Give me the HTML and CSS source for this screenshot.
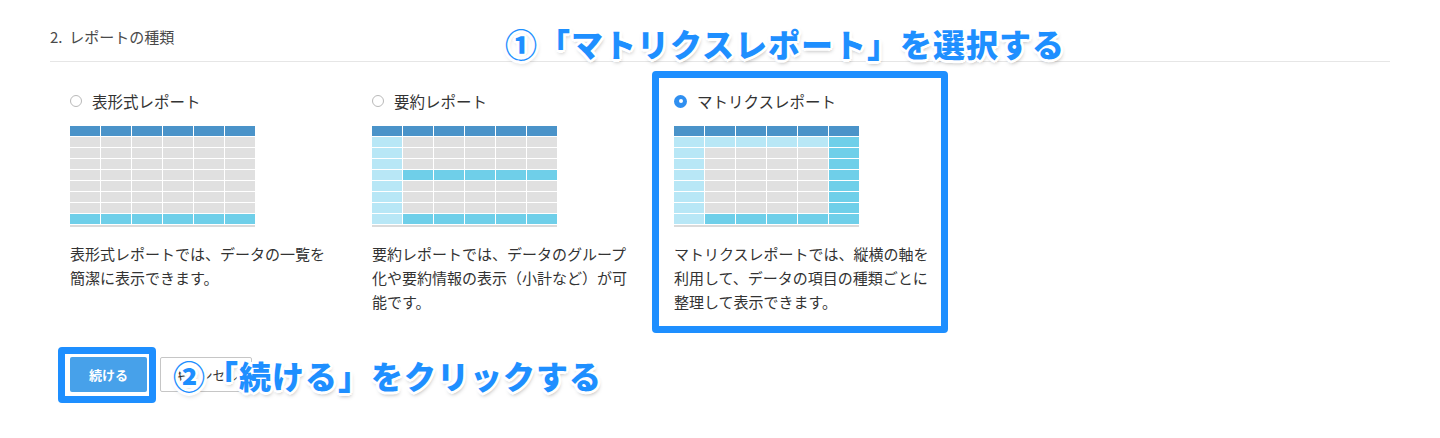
FILE: index.html
```html
<!DOCTYPE html>
<html lang="ja">
<head>
<meta charset="utf-8">
<title>レポートの種類</title>
<link rel="stylesheet" href="styles.css">
</head>
<body>
<div class="page">
  <div class="section-title">2.&nbsp; レポートの種類</div>

  <div class="options">
    <div class="option">
      <div class="radio-row"><span class="radio"></span><span class="label">表形式レポート</span></div>
      <div class="grid">
        <i class="h"></i><i class="h"></i><i class="h"></i><i class="h"></i><i class="h"></i><i class="h"></i>
        <i class="g"></i><i class="g"></i><i class="g"></i><i class="g"></i><i class="g"></i><i class="g"></i>
        <i class="g"></i><i class="g"></i><i class="g"></i><i class="g"></i><i class="g"></i><i class="g"></i>
        <i class="g"></i><i class="g"></i><i class="g"></i><i class="g"></i><i class="g"></i><i class="g"></i>
        <i class="g"></i><i class="g"></i><i class="g"></i><i class="g"></i><i class="g"></i><i class="g"></i>
        <i class="g"></i><i class="g"></i><i class="g"></i><i class="g"></i><i class="g"></i><i class="g"></i>
        <i class="g"></i><i class="g"></i><i class="g"></i><i class="g"></i><i class="g"></i><i class="g"></i>
        <i class="g"></i><i class="g"></i><i class="g"></i><i class="g"></i><i class="g"></i><i class="g"></i>
        <i class="m"></i><i class="m"></i><i class="m"></i><i class="m"></i><i class="m"></i><i class="m"></i>
      </div>
      <div class="grid-line"></div>
      <p class="desc">表形式レポートでは、データの一覧を簡潔に表示できます。</p>
    </div>

    <div class="option">
      <div class="radio-row"><span class="radio"></span><span class="label">要約レポート</span></div>
      <div class="grid">
        <i class="h"></i><i class="h"></i><i class="h"></i><i class="h"></i><i class="h"></i><i class="h"></i>
        <i class="l"></i><i class="g"></i><i class="g"></i><i class="g"></i><i class="g"></i><i class="g"></i>
        <i class="l"></i><i class="g"></i><i class="g"></i><i class="g"></i><i class="g"></i><i class="g"></i>
        <i class="l"></i><i class="g"></i><i class="g"></i><i class="g"></i><i class="g"></i><i class="g"></i>
        <i class="l"></i><i class="m"></i><i class="m"></i><i class="m"></i><i class="m"></i><i class="m"></i>
        <i class="l"></i><i class="g"></i><i class="g"></i><i class="g"></i><i class="g"></i><i class="g"></i>
        <i class="l"></i><i class="g"></i><i class="g"></i><i class="g"></i><i class="g"></i><i class="g"></i>
        <i class="l"></i><i class="g"></i><i class="g"></i><i class="g"></i><i class="g"></i><i class="g"></i>
        <i class="l"></i><i class="m"></i><i class="m"></i><i class="m"></i><i class="m"></i><i class="m"></i>
      </div>
      <div class="grid-line"></div>
      <p class="desc">要約レポートでは、データのグループ化や要約情報の表示（小計など）が可能です。</p>
    </div>

    <div class="option">
      <div class="radio-row"><span class="radio checked"></span><span class="label">マトリクスレポート</span></div>
      <div class="grid">
        <i class="h"></i><i class="h"></i><i class="h"></i><i class="h"></i><i class="h"></i><i class="h"></i>
        <i class="l"></i><i class="l"></i><i class="l"></i><i class="l"></i><i class="l"></i><i class="m"></i>
        <i class="l"></i><i class="g"></i><i class="g"></i><i class="g"></i><i class="g"></i><i class="m"></i>
        <i class="l"></i><i class="g"></i><i class="g"></i><i class="g"></i><i class="g"></i><i class="m"></i>
        <i class="l"></i><i class="g"></i><i class="g"></i><i class="g"></i><i class="g"></i><i class="m"></i>
        <i class="l"></i><i class="g"></i><i class="g"></i><i class="g"></i><i class="g"></i><i class="m"></i>
        <i class="l"></i><i class="g"></i><i class="g"></i><i class="g"></i><i class="g"></i><i class="m"></i>
        <i class="l"></i><i class="g"></i><i class="g"></i><i class="g"></i><i class="g"></i><i class="m"></i>
        <i class="l"></i><i class="m"></i><i class="m"></i><i class="m"></i><i class="m"></i><i class="m"></i>
      </div>
      <div class="grid-line"></div>
      <p class="desc">マトリクスレポートでは、縦横の軸を利用して、データの項目の種類ごとに整理して表示できます。</p>
      <div class="highlight hl-option"></div>
    </div>
  </div>

  <div class="actions">
    <button class="btn btn-primary">続ける</button>
    <button class="btn btn-cancel">キャンセル</button>
    <div class="highlight hl-button"></div>
  </div>

  <div class="note note-1">①「マトリクスレポート」を選択する</div>
  <div class="note note-2">②「続ける」をクリックする</div>
</div>
</body>
</html>
```

FILE: styles.css
```css
* { box-sizing: border-box; }

html, body {
  margin: 0;
  padding: 0;
  background: #ffffff;
}

body {
  font-family: "Noto Sans CJK JP", "Noto Sans", sans-serif;
  color: #333333;
}

.page {
  position: relative;
  width: 1440px;
  height: 438px;
  padding-top: 27px;
  overflow: hidden;
}

.section-title {
  margin-left: 50px;
  width: 1340px;
  font-size: 15px;
  line-height: 20px;
  color: #4a4a4a;
  padding-bottom: 14px;
  border-bottom: 1px solid #e6e6e6;
}

.options {
  display: flex;
  gap: 40px;
  margin-left: 70px;
  padding-top: 29px;
}

.option {
  position: relative;
  width: 262px;
}

.radio-row {
  display: flex;
  align-items: center;
  height: 20px;
}

.radio {
  width: 12px;
  height: 12px;
  border: 1px solid #b9b9b9;
  border-radius: 50%;
  background: #ffffff;
  flex: none;
}

.radio.checked {
  width: 13px;
  height: 13px;
  border: none;
  background: #2f8ff0;
  display: flex;
  align-items: center;
  justify-content: center;
}

.radio.checked::after {
  content: "";
  width: 4px;
  height: 4px;
  border-radius: 50%;
  background: #ffffff;
}

.label {
  margin-left: 10px;
  font-size: 15.5px;
  color: #333333;
  line-height: 20px;
}

.grid {
  margin-top: 15px;
  display: grid;
  grid-template-columns: repeat(6, 30px);
  grid-auto-rows: 10px;
  gap: 1px;
  width: 185px;
}

.grid i { display: block; }
.grid .h { background: #4a93c9; }
.grid .g { background: #e0e0e0; }
.grid .l { background: #b8e7f6; }
.grid .m { background: #6fcfe9; }

.grid-line {
  width: 185px;
  height: 2px;
  margin-top: 1px;
  background: #dadada;
}

.desc {
  margin: 15px 0 0;
  font-size: 15px;
  line-height: 24px;
  color: #333333;
}

.actions {
  position: relative;
  display: flex;
  gap: 13px;
  margin-left: 70px;
  margin-top: 43px;
}

.btn {
  height: 35px;
  font-family: "Noto Sans CJK JP", sans-serif;
  font-size: 13px;
  cursor: pointer;
}

.btn-primary {
  width: 77px;
  background: #47a1ea;
  color: #ffffff;
  font-weight: 700;
  border: none;
  border-radius: 2px;
}

.btn-cancel {
  width: 92px;
  background: #ffffff;
  color: #333333;
  border: 1px solid #c6c6c6;
  border-radius: 2px;
}

.highlight {
  position: absolute;
  border: 7px solid #1e8fff;
  border-radius: 4px;
  pointer-events: none;
}

.hl-option {
  left: -22px;
  top: -20px;
  width: 296px;
  height: 262px;
}

.hl-button {
  left: -12px;
  top: -10px;
  width: 98px;
  height: 56px;
}

.note {
  position: absolute;
  font-family: "Noto Sans CJK JP", sans-serif;
  font-weight: 900;
  font-size: 32px;
  line-height: 40px;
  letter-spacing: 1px;
  color: #1e8fff;
  white-space: nowrap;
  text-shadow:
    2px 0 0 #fff, -2px 0 0 #fff, 0 2px 0 #fff, 0 -2px 0 #fff,
    2px 2px 0 #fff, -2px -2px 0 #fff, 2px -2px 0 #fff, -2px 2px 0 #fff,
    3px 0 0 #fff, -3px 0 0 #fff, 0 3px 0 #fff, 0 -3px 0 #fff,
    1px 3px 4px rgba(0, 0, 0, 0.35);
}

.note-1 {
  left: 505px;
  top: 23px;
}

.note-2 {
  left: 173px;
  top: 355px;
}
```
